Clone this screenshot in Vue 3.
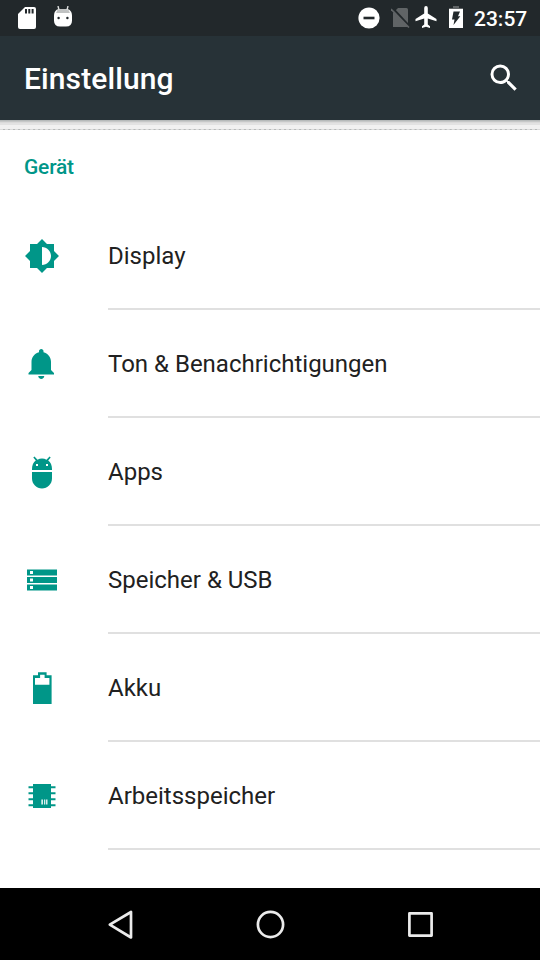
<script setup>
const items = [
  { id: 'display', label: 'Display' },
  { id: 'sound', label: 'Ton & Benachrichtigungen' },
  { id: 'apps', label: 'Apps' },
  { id: 'storage', label: 'Speicher & USB' },
  { id: 'battery', label: 'Akku' },
  { id: 'memory', label: 'Arbeitsspeicher' },
]
</script>

<template>
  <div class="screen">
    <header class="status">
      <svg class="sd" width="18" height="22" viewBox="0 0 18 22">
        <path fill="#fff" d="M7 0h9a2 2 0 0 1 2 2v18a2 2 0 0 1-2 2H2a2 2 0 0 1-2-2V7z" />
        <path fill="#22282b" d="M7 2h2v4.600H7zM10.300 2h2v4.600h-2zM13.600 2h2v4.600h-2z" />
      </svg>
      <svg class="robot" width="18" height="22" viewBox="0 0 18 22">
        <path fill="#fff" d="M3 3.500h12q3 2 3 6v5q0 6-6 6H6q-6 0-6-6v-5q0-4 3-6z" />
        <path fill="#c0c2c2" d="M4 3h10l2 4H2z" />
        <path stroke="#dcdddd" stroke-width="1.400" d="M4 0l1 4M14 0l-1 4" />
        <circle cx="4.600" cy="12" r="1.200" fill="#22282b" />
        <circle cx="13.400" cy="12" r="1.200" fill="#22282b" />
      </svg>
      <span class="spacer"></span>
      <svg class="dnd" width="22" height="22" viewBox="0 0 22 22">
        <circle cx="11" cy="11" r="10.600" fill="#fff" />
        <path fill="#22282b" d="M5.500 9.700h11v2.600h-11z" />
      </svg>
      <svg class="nosim" width="19" height="20" viewBox="0 0 19 20">
        <path fill="#606466" d="M7 0h8.500q1.500 0 1.500 1.500V19H2V5z" />
        <path stroke="#22282b" stroke-width="2.200" d="M1.500 0l18 19.500" />
        <path stroke="#606466" stroke-width="1.600" d="M0 1l18 18.500" />
      </svg>
      <svg class="plane" width="22" height="23" viewBox="0 0 22 23">
        <path fill="#fff" d="M21.500 15.200v-2.300L12.800 7.400V1.900a1.800 1.800 0 0 0-3.600 0v5.500L.5 12.900v2.300l8.700-2.800v6.100L7 20.200V22l4-1.200 4 1.200v-1.800l-2.200-1.700v-6.100z" />
      </svg>
      <svg class="charge" width="14" height="22" viewBox="0 0 14 22">
        <path fill="#606466" d="M4 0h6v2h4v2H0V2h4z" />
        <path fill="#fff" d="M0 3h14v19H0z" />
        <path fill="#22282b" d="M4.500 5.500h6.500L9 10.200h2.300L4.500 19l1-5.500H3z" />
      </svg>
      <span class="clock">23:57</span>
    </header>

    <div class="toolbar">
      <h1>Einstellung</h1>
      <svg class="search" width="36" height="36" viewBox="0 0 24 24">
        <path fill="#fff" d="M15.5 14h-.79l-.28-.27A6.471 6.471 0 0 0 16 9.500 6.5 6.5 0 1 0 9.500 16c1.610 0 3.090-.59 4.230-1.570l.27.28v.79l5 4.990L20.490 19l-4.990-5zm-6 0C7.010 14 5 11.990 5 9.500S7.010 5 9.500 5 14 7.010 14 9.500 11.990 14 9.500 14z" />
      </svg>
    </div>
    <div class="shade"></div>

    <main>
      <h2>Gerät</h2>
      <div v-for="item in items" :key="item.id" class="row">
        <svg class="icon" width="36" height="36" viewBox="0 0 36 36">
          <path v-if="item.id === 'display'" transform="scale(1.5)" fill-rule="evenodd" d="M20 15.31L23.31 12 20 8.69V4h-4.69L12 .69 8.69 4H4v4.69L.69 12 4 15.31V20h4.69L12 23.31 15.31 20H20zM12 18V6c3.31 0 6 2.69 6 6s-2.69 6-6 6z" />
          <path v-else-if="item.id === 'sound'" transform="scale(1.5)" d="M11.5 22c1.1 0 2-.9 2-2h-4c0 1.1.9 2 2 2zm6.500-6v-5.500c0-3.070-2.130-5.640-5-6.320V3.500c0-.83-.67-1.500-1.500-1.500S10 2.670 10 3.500v.68c-2.870.68-5 3.250-5 6.320V16l-2 2v1h17v-1z" />
          <path v-else-if="item.id === 'apps'" fill-rule="evenodd" d="M8 24.500c0 5.500 4.500 10 10 10s10-4.500 10-10V18H8zM24.200 6.600l2.500-3-1.200-1.200-3 3.300C21.200 4.900 19.600 4.500 18 4.500s-3.200.4-4.500 1.200l-3-3.300-1.200 1.200 2.500 3C9.300 8.500 8 11.500 8 15v1h20v-1c0-3.500-1.300-6.500-3.800-8.400zM12 10h2v2h-2zM22 10h2v2h-2z" />
          <path v-else-if="item.id === 'storage'" fill-rule="evenodd" d="M3 7.500h30v6H3zM6 9v3h3V9zM3 15h30v6H3zM6 16.500v3h3v-3zM3 22.500h30v6H3zM6 24v3h3v-3z" />
          <path v-else-if="item.id === 'battery'" fill-rule="evenodd" d="M9 5.300h5V2.300h8.600v3h5V34H9zM11 8v6.800h14.400V8h-4.800V4.800h-4.500V8z" />
          <g v-else>
            <path d="M9 6h18v24H9zM4.500 8.300H9v1.900H4.500zM4.500 14.300H9v1.900H4.500zM4.500 20.300H9v1.900H4.500zM4.500 26.300H9v1.900H4.500zM27 8.300h4.500v1.900H27zM27 14.300h4.500v1.900H27zM27 20.300h4.500v1.900H27zM27 26.300h4.500v1.900H27z" />
            <path fill="#fff" fill-opacity=".85" d="M17.300 21.500h1.700v5h-1.700zM20 21.500h1.300v5H20zM22 21.500h1.500v5H22z" />
          </g>
        </svg>
        <div class="label">{{ item.label }}</div>
      </div>
    </main>

    <nav>
      <svg width="36" height="36" viewBox="0 0 36 36">
        <path d="M29 6v25.500L7.800 18.700z" />
      </svg>
      <svg width="36" height="36" viewBox="0 0 36 36">
        <circle cx="18.500" cy="18.500" r="12.600" />
      </svg>
      <svg width="36" height="36" viewBox="0 0 36 36">
        <rect x="7.400" y="7.400" width="22.200" height="22.200" />
      </svg>
    </nav>
  </div>
</template>

<style>
body {
  margin: 0;
}
</style>

<style scoped>
.screen {
  width: 540px;
  height: 960px;
  display: flex;
  flex-direction: column;
  overflow: hidden;
  background: #fff;
  font-family: Roboto, sans-serif;
}
.screen > * {
  flex-shrink: 0;
}
.status {
  display: flex;
  align-items: flex-start;
  box-sizing: border-box;
  height: 36px;
  padding: 6px 11px 0 18px;
  background: #22282b;
}
.sd {
  margin-top: 1px;
}
.robot {
  margin-left: 18px;
}
.spacer {
  flex: 1;
}
.dnd {
  margin-top: 1px;
}
.nosim {
  margin: 2px 0 0 11px;
}
.plane {
  margin-left: 5px;
}
.charge {
  margin-left: 12px;
}
.clock {
  width: 55px;
  margin-left: 11px;
  font-size: 21px;
  font-weight: 500;
  line-height: 26px;
  color: #fff;
  white-space: nowrap;
}
.toolbar {
  display: flex;
  align-items: center;
  justify-content: space-between;
  box-sizing: border-box;
  height: 84px;
  padding: 0 18px 0 24px;
  background: #273237;
}
h1 {
  margin: 0;
  padding-top: 2px;
  font-size: 30px;
  font-weight: 500;
  line-height: 36px;
  letter-spacing: 0.1px;
  color: #fff;
}
.shade {
  box-sizing: border-box;
  height: 10px;
  border-bottom: 1px dashed #dcdcdc;
  background: linear-gradient(#b6baba 0 1px, #c6c8c8 1px 2px, #dadada 2px 3px, #e2e2e2 3px 5px, #f1f1f1 5px);
}
main {
  height: 758px;
}
h2 {
  margin: 0;
  padding-left: 24px;
  height: 72px;
  font-size: 21px;
  font-weight: 500;
  line-height: 74px;
  letter-spacing: -0.2px;
  color: #009688;
}
.row {
  display: flex;
  align-items: center;
  height: 108px;
  padding-left: 24px;
}
.icon {
  fill: #009688;
}
.label {
  flex: 1;
  box-sizing: border-box;
  height: 108px;
  margin-left: 48px;
  border-bottom: 2px solid #e0e0e0;
  font-size: 24px;
  line-height: 108px;
  color: #212121;
}
nav {
  display: flex;
  align-items: center;
  justify-content: center;
  gap: 114px;
  height: 72px;
  background: #000;
}
nav svg {
  fill: none;
  stroke: #ebebeb;
  stroke-width: 2.7;
  stroke-linejoin: round;
}
</style>
